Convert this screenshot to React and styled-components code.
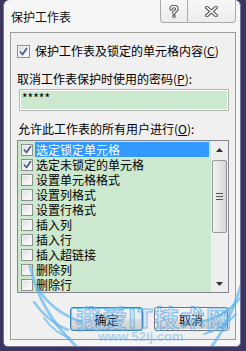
import React from 'react';
import styled, { createGlobalStyle } from 'styled-components';

const Global = createGlobalStyle`
  html, body { margin: 0; padding: 0; background: #3b3562; }
  body {
    width: 246px; height: 351px; overflow: hidden;
    font-family: "Noto Sans CJK SC", "Noto Sans", sans-serif;
    color: #000;
  }
`;

const Window = styled.div`
  position: relative;
  margin-left: 3px;
  width: 238px;
  height: 347px;
  box-sizing: border-box;
  background: #f6f6f6;
  border: 1px solid #77739a;
  border-top: none;
  border-radius: 6px 6px 5px 5px;
  display: flex;
  flex-direction: column;
  overflow: hidden;
`;

const TitleBar = styled.div`
  height: 32px;
  flex: none;
  display: flex;
  justify-content: space-between;
  align-items: flex-start;
`;

const Title = styled.div`
  margin: 9px 0 0 7px;
  font-size: 12px;
  line-height: 16px;
  color: #111;
`;

const CaptionButtons = styled.div`
  display: flex;
  margin-right: 4px;
`;

const CaptionButton = styled.div`
  width: ${p => p.$w}px;
  height: 23px;
  box-sizing: border-box;
  border: 1px solid #a9a9ad;
  border-top: none;
  border-left: ${p => (p.$first ? '1px solid #a9a9ad' : 'none')};
  border-radius: ${p => (p.$first ? '0 0 0 4px' : '0 0 4px 0')};
  background: linear-gradient(#f7f7f7, #ececec);
  display: flex;
  align-items: center;
  justify-content: center;
`;

const Client = styled.div`
  margin: 0 4px 6px 6px;
  flex: 1;
  box-sizing: border-box;
  border: 1px solid #9d9d9d;
  background: #f0f0f0;
  display: flex;
  flex-direction: column;
  align-items: flex-start;
`;

const CheckRow = styled.label`
  margin: 11px 0 0 6px;
  display: flex;
  align-items: center;
  gap: 5px;
  font-size: 12px;
  line-height: 14px;
`;

const Box = styled.span`
  width: ${p => p.$size}px;
  height: ${p => p.$size}px;
  box-sizing: border-box;
  flex: none;
  border: 1px solid #8e8f8f;
  background: linear-gradient(135deg, #d8d8d8 0%, #f4f4f4 60%, #ffffff 100%);
  box-shadow: inset 0 0 0 1px #f4f4f4;
  display: flex;
  align-items: center;
  justify-content: center;
`;

const FieldLabel = styled.div`
  margin: ${p => p.$mt}px 0 0 ${p => p.$ml}px;
  font-size: 12px;
  line-height: 16px;
`;

const U = styled.span`
  text-decoration: underline;
  text-underline-offset: 1px;
`;

const PasswordBox = styled.div`
  margin: 2px 0 0 8px;
  width: 210px;
  height: 22px;
  box-sizing: border-box;
  border: 1px solid #b5b5b5;
  padding: 1px;
  background: #fdfdfd;
`;

const PasswordInner = styled.div`
  height: 100%;
  background: #cce8cf;
  font-size: 12px;
  line-height: 14px;
  padding-left: 1px;
`;

const ListBox = styled.div`
  margin: 3px 0 0 6px;
  width: 212px;
  height: 153px;
  box-sizing: border-box;
  border: 1px solid #828790;
  background: #cce8cf;
  display: flex;
  overflow: hidden;
`;

const Rows = styled.div`
  flex: 1;
  padding: 1px 2px 0 3px;
  display: flex;
  flex-direction: column;
`;

const Row = styled.div`
  height: 15px;
  flex: none;
  display: flex;
  align-items: center;
  gap: 2px;
`;

const RowText = styled.div`
  flex: 1;
  height: 15px;
  padding-left: 1px;
  font-size: 12px;
  line-height: 15px;
  color: ${p => (p.$sel ? '#fff' : '#000')};
  background: ${p => (p.$sel ? '#3399ff' : 'transparent')};
`;

const ScrollBar = styled.div`
  width: 17px;
  flex: none;
  background: #eeeeee;
  display: flex;
  flex-direction: column;
  align-items: center;
`;

const ArrowBtn = styled.div`
  width: 17px;
  height: 17px;
  flex: none;
  display: flex;
  align-items: center;
  justify-content: center;
`;

const Track = styled.div`
  flex: 1;
  width: 100%;
  display: flex;
  flex-direction: column;
  align-items: center;
`;

const Thumb = styled.div`
  margin-top: 2px;
  width: 15px;
  height: 73px;
  box-sizing: border-box;
  border: 1px solid #979797;
  border-radius: 2px;
  background: linear-gradient(90deg, #f3f3f3, #e4e4e4 50%, #d5d5d5);
  display: flex;
  align-items: center;
  justify-content: center;
`;

const ButtonRow = styled.div`
  margin-top: 14px;
  align-self: stretch;
  padding-right: 7px;
  display: flex;
  justify-content: flex-end;
  gap: 11px;
`;

const Button = styled.button`
  width: ${p => p.$w}px;
  height: 24px;
  box-sizing: border-box;
  padding: 0;
  border-radius: 3px;
  border: 1px solid ${p => (p.$default ? '#3c7fb1' : '#707070')};
  box-shadow: ${p => (p.$default ? 'inset 0 0 0 1px #6fd0f5' : 'inset 0 0 0 1px #fcfcfc')};
  background: linear-gradient(#f2f2f2 0%, #ebebeb 49%, #dddddd 50%, #cfcfcf 100%);
  font-family: "Noto Sans CJK SC", "Noto Sans", sans-serif;
  font-size: 12px;
  color: #000;
`;

const Watermark = styled.div`
  position: absolute;
  inset: 0;
  pointer-events: none;
`;

const WaterText = styled.div`
  position: absolute;
  left: 72px;
  top: 303px;
  font-size: 25px;
  line-height: 28px;
  font-weight: 700;
  letter-spacing: 1px;
  color: rgba(140, 200, 242, 0.22);
  -webkit-text-stroke: 1px rgba(80, 165, 232, 0.7);
  white-space: nowrap;
`;

const WaterUrl = styled.div`
  position: absolute;
  left: 94px;
  top: 329px;
  font-family: "Liberation Sans", sans-serif;
  font-size: 13px;
  line-height: 15px;
  font-weight: 700;
  color: rgba(100, 178, 238, 0.5);
  white-space: nowrap;
`;

const Check = () => (
  <svg width="9" height="9" viewBox="0 0 9 9">
    <path d="M1 4.5 L3.5 7.5 L8 1" fill="none" stroke="#4a5f94" strokeWidth="1.8" strokeLinejoin="round" />
  </svg>
);

const CheckBox = ({ checked, size }) => <Box $size={size}>{checked && <Check />}</Box>;

const items = [
  ['选定锁定单元格', true],
  ['选定未锁定的单元格', true],
  ['设置单元格格式', false],
  ['设置列格式', false],
  ['设置行格式', false],
  ['插入列', false],
  ['插入行', false],
  ['插入超链接', false],
  ['删除列', false],
  ['删除行', false],
];

export default function App() {
  return (
    <>
      <Global />
      <Window>
        <TitleBar>
          <Title>保护工作表</Title>
          <CaptionButtons>
            <CaptionButton $w={28} $first>
              <svg width="10" height="13" viewBox="0 0 10 13">
                <path d="M2 4 Q2 1.5 5 1.5 Q8 1.5 8 4 Q8 5.5 5 7 L5 8.5" fill="none" stroke="#555" strokeWidth="3.4" strokeLinecap="round" />
                <circle cx="5" cy="11.2" r="1.7" fill="#555" />
                <path d="M2 4 Q2 1.5 5 1.5 Q8 1.5 8 4 Q8 5.5 5 7 L5 8.5" fill="none" stroke="#fff" strokeWidth="1.4" strokeLinecap="round" />
                <circle cx="5" cy="11.2" r="0.7" fill="#fff" />
              </svg>
            </CaptionButton>
            <CaptionButton $w={48}>
              <svg width="13" height="11" viewBox="0 0 13 11">
                <path d="M2 1.5 L11 9.5 M11 1.5 L2 9.5" stroke="#555" strokeWidth="3.6" strokeLinecap="square" />
                <path d="M2 1.5 L11 9.5 M11 1.5 L2 9.5" stroke="#fff" strokeWidth="1.5" strokeLinecap="square" />
              </svg>
            </CaptionButton>
          </CaptionButtons>
        </TitleBar>
        <Client>
          <CheckRow>
            <CheckBox checked size={13} />
            <span>保护工作表及锁定的单元格内容(<U>C</U>)</span>
          </CheckRow>
          <FieldLabel $mt={13} $ml={6}>取消工作表保护时使用的密码(<U>P</U>):</FieldLabel>
          <PasswordBox>
            <PasswordInner>*****</PasswordInner>
          </PasswordBox>
          <FieldLabel $mt={10} $ml={7}>允许此工作表的所有用户进行(<U>O</U>):</FieldLabel>
          <ListBox>
            <Rows>
              {items.map(([label, checked], i) => (
                <Row key={label}>
                  <CheckBox checked={checked} size={12} />
                  <RowText $sel={i === 0}>{label}</RowText>
                </Row>
              ))}
            </Rows>
            <ScrollBar>
              <ArrowBtn>
                <svg width="7" height="4" viewBox="0 0 7 4"><path d="M0 4 L3.5 0 L7 4 Z" fill="#333" /></svg>
              </ArrowBtn>
              <Track>
                <Thumb>
                  <svg width="7" height="7" viewBox="0 0 7 7">
                    <path d="M0 0.5 H7 M0 3.5 H7 M0 6.5 H7" stroke="#555" strokeWidth="1" />
                  </svg>
                </Thumb>
              </Track>
              <ArrowBtn>
                <svg width="7" height="4" viewBox="0 0 7 4"><path d="M0 0 L7 0 L3.5 4 Z" fill="#333" /></svg>
              </ArrowBtn>
            </ScrollBar>
          </ListBox>
          <ButtonRow>
            <Button $w={73} $default>确定</Button>
            <Button $w={74}>取消</Button>
          </ButtonRow>
        </Client>
        <Watermark>
          <svg width="238" height="347" viewBox="0 0 238 347" style={{ position: 'absolute', left: 0, top: 0 }}>
            <g fill="none" stroke="rgba(90,178,238,0.65)" strokeLinecap="round">
              <path d="M26 266 Q36 312 72 346" strokeWidth="3" />
              <path d="M34 288 Q48 312 78 322" strokeWidth="2.5" />
              <path d="M30 302 Q44 322 64 330" strokeWidth="2.5" />
              <path d="M40 318 Q52 334 66 338" strokeWidth="2" />
              <path d="M238 282 Q226 322 208 346" strokeWidth="3" />
              <path d="M236 298 Q220 318 196 322" strokeWidth="2.5" />
              <path d="M232 314 Q218 330 200 334" strokeWidth="2" />
            </g>
          </svg>
          <WaterText>我爱IT技术网</WaterText>
          <WaterUrl>www.52ij.com</WaterUrl>
        </Watermark>
      </Window>
    </>
  );
}
